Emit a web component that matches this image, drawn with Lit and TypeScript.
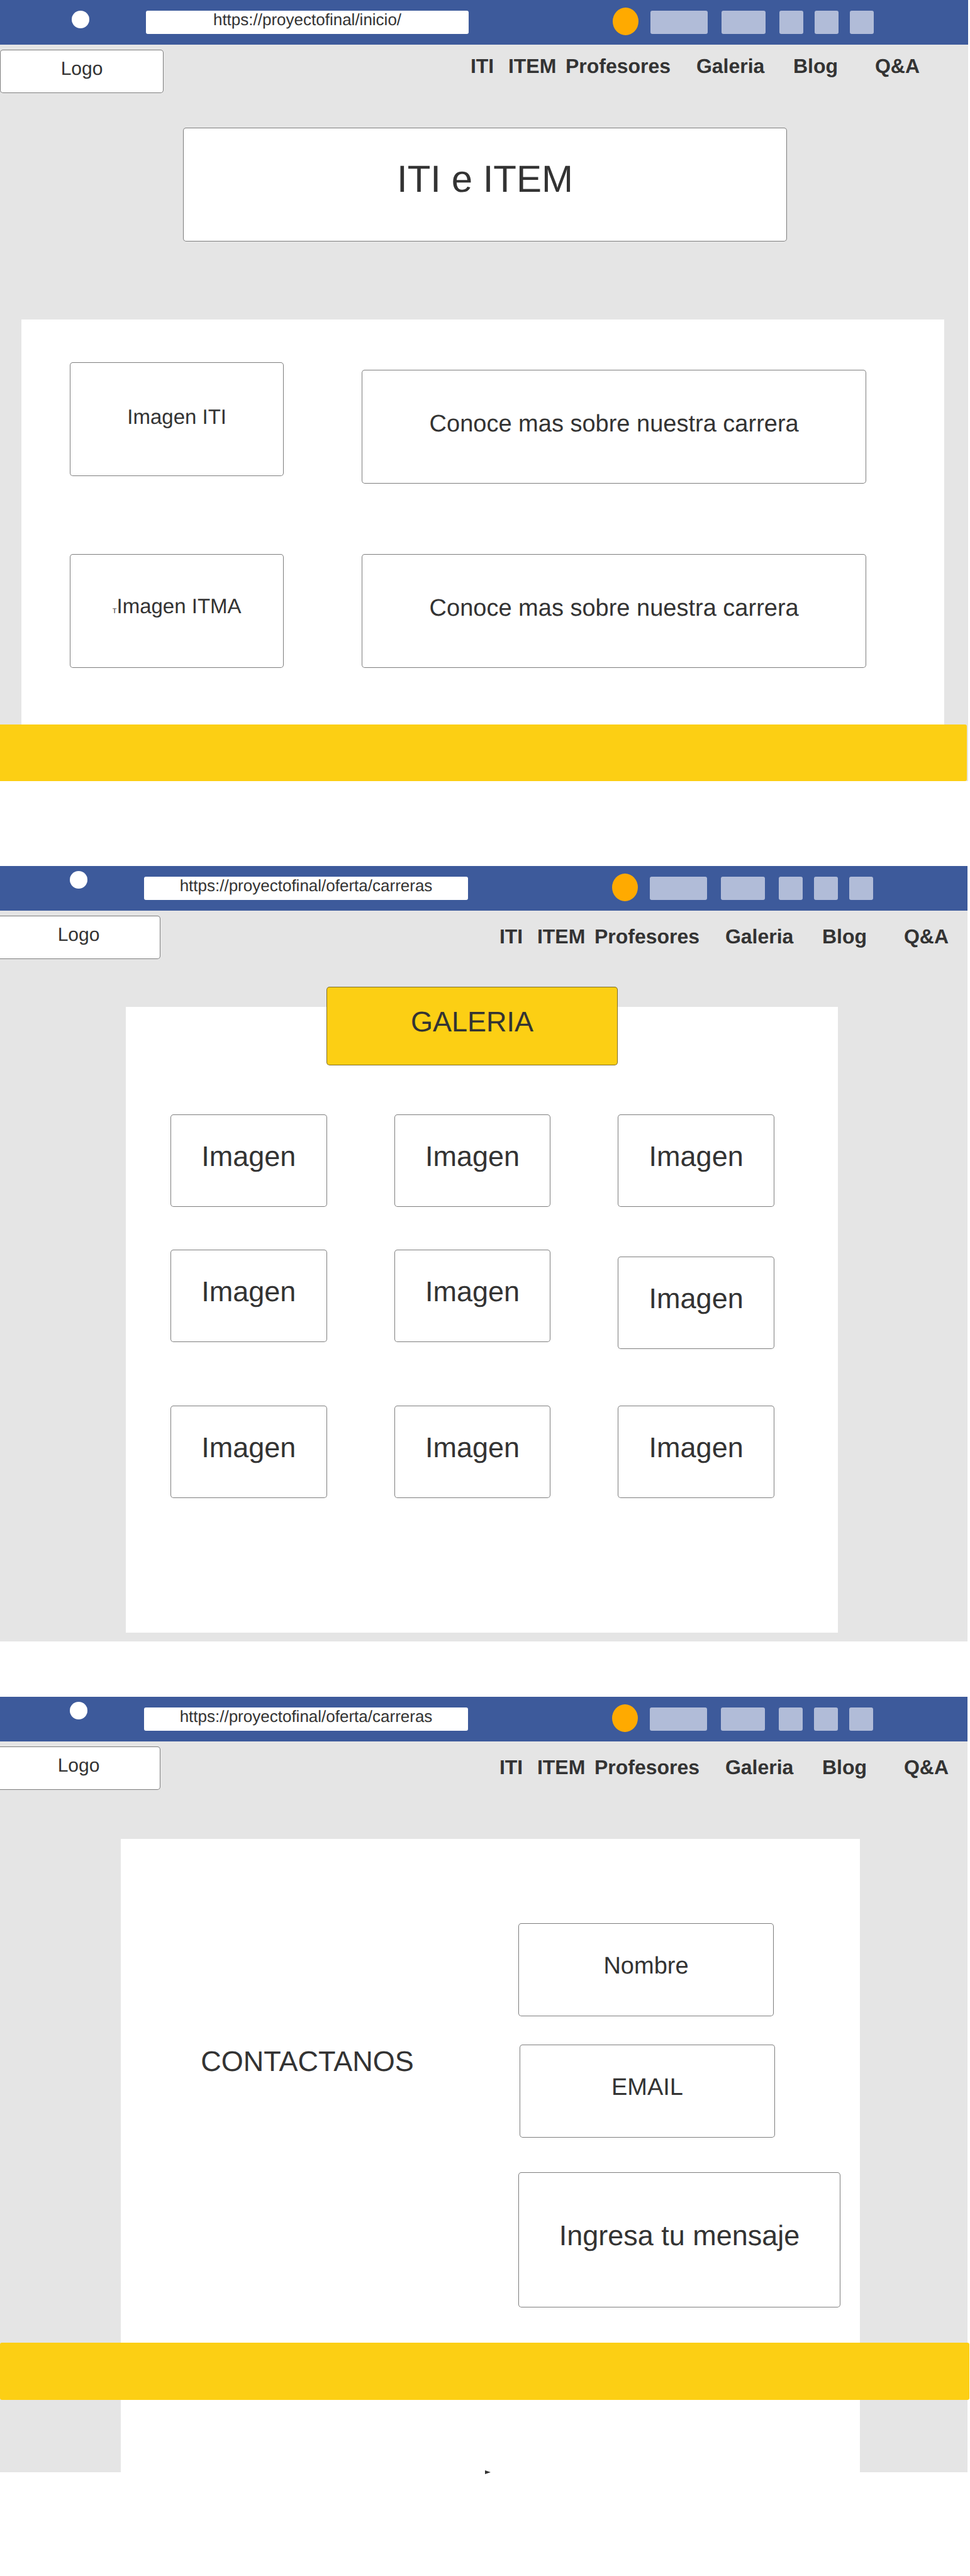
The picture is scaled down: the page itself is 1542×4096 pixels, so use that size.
import { LitElement, html, css } from "lit";
import { customElement, property } from "lit/decorators.js";
import { classMap } from "lit/directives/class-map.js";

const NAV_ITEMS = ["ITI", "ITEM", "Profesores", "Galeria", "Blog", "Q&A"];

@customElement("site-header")
class SiteHeader extends LitElement {
  static styles = css`
    :host {
      display: block;
    }
    .bar {
      box-sizing: border-box;
      height: 71px;
      padding: 8px 150px 0 111px;
      display: flex;
      align-items: flex-start;
      background: #3d5a9b;
    }
    .dot {
      flex: none;
      width: 28px;
      height: 28px;
      border-radius: 50%;
      background: #fff;
    }
    .url {
      box-sizing: border-box;
      flex: 1;
      min-width: 0;
      height: 37px;
      margin: 9px 229px 0 90px;
      padding: 0 0 8px;
      border: 0;
      border-radius: 3px;
      background: #fff;
      color: #333;
      font: 26px/29px "Liberation Sans", Arial, sans-serif;
      text-rendering: geometricPrecision;
      text-align: center;
    }
    .avatar {
      flex: none;
      width: 41px;
      height: 44px;
      margin: 4px 19px 0 0;
      border-radius: 50%;
      background: #fa0;
    }
    .chips {
      display: flex;
      gap: 18px;
      margin-top: 9px;
    }
    .chip {
      width: 38px;
      height: 37px;
      border-radius: 3px;
      background: #b1bcd8;
    }
    .wide {
      width: 91px;
      margin-right: 4px;
    }
    .medium {
      width: 70px;
      margin-right: 4px;
    }
    .row {
      display: flex;
      justify-content: space-between;
      align-items: flex-start;
      padding: 8px 30px 0 0;
    }
    .logo {
      box-sizing: border-box;
      width: 260px;
      height: 69px;
      margin-left: -5px;
      padding-bottom: 8px;
      display: flex;
      align-items: center;
      justify-content: center;
      border: 1px solid rgba(51, 51, 51, 0.64);
      border-radius: 5px;
      background: #fff;
      color: #333;
      font-size: 30px;
      line-height: 34px;
      text-decoration: none;
    }
    .nav {
      display: grid;
      grid-template-columns: 60px 91px 208px 154px 130px auto;
      margin-top: 15px;
    }
    .link {
      color: #333;
      font-size: 32px;
      line-height: 36px;
      font-weight: 700;
      text-decoration: none;
    }
    .home .bar {
      padding-left: 114px;
    }
    .home .dot {
      margin-top: 9px;
    }
    .home .row {
      padding-right: 77px;
    }
    .home .logo {
      margin-left: 0;
    }
    .home .nav {
      margin-top: 8px;
    }
  `;

  @property() url = "";
  @property({ type: Boolean }) home = false;

  render() {
    return html`
      <header class=${classMap({ header: true, home: this.home })}>
        <div class="bar">
          <span class="dot"></span>
          <input class="url" type="text" aria-label="URL" .value=${this.url} />
          <span class="avatar"></span>
          <div class="chips">
            <span class="chip wide"></span>
            <span class="chip medium"></span>
            <span class="chip"></span>
            <span class="chip"></span>
            <span class="chip"></span>
          </div>
        </div>
        <div class="row">
          <a class="logo" href="#">Logo</a>
          <nav class="nav">
            ${NAV_ITEMS.map((item) => html`<a class="link" href="#">${item}</a>`)}
          </nav>
        </div>
      </header>
    `;
  }
}

@customElement("app-root")
class AppRoot extends LitElement {
  static styles = css`
    :host {
      display: block;
      padding-bottom: 164px;
      background: #fff;
      color: #333;
      font-family: "Liberation Sans", Arial, sans-serif;
      text-rendering: geometricPrecision;
      overflow-x: clip;
    }
    .screen {
      margin-right: 4px;
      background: #e5e5e5;
    }
    .first {
      margin-right: 3px;
    }
    .second {
      margin-top: 135px;
      padding-bottom: 14px;
    }
    .third {
      margin-top: 88px;
    }
    .box {
      box-sizing: border-box;
      display: flex;
      align-items: center;
      justify-content: center;
      border: 1px solid rgba(51, 51, 51, 0.64);
      border-radius: 5px;
      background: #fff;
      color: #333;
      text-decoration: none;
    }
    .title {
      margin: 0;
      font-weight: 400;
      font-size: 45px;
      line-height: 52px;
    }
    .hero {
      height: 181px;
      margin: 55px 288px 0 291px;
      padding-bottom: 17px;
      font-size: 60px;
      line-height: 68px;
    }
    .panel {
      background: #fff;
    }
    .careers {
      display: grid;
      grid-template-columns: 340fr 801fr;
      gap: 112px 124px;
      margin: 124px 38px 0 34px;
      padding: 68px 124px 90px 77px;
    }
    .picture {
      height: 181px;
      padding-bottom: 8px;
      font-size: 33px;
      line-height: 38px;
    }
    .tiny {
      font-size: 11px;
    }
    .about {
      height: 181px;
      padding-bottom: 10px;
      font-size: 38px;
      line-height: 44px;
    }
    .lower {
      margin-top: 12px;
    }
    .band {
      height: 90px;
      border-radius: 3px;
      background: #fccf14;
    }
    .first .band {
      margin-right: 2px;
      border-radius: 0 3px 3px 0;
    }
    .third .band {
      height: 91px;
      margin-right: -3px;
    }
    .gallery {
      display: flex;
      flex-direction: column;
      margin: 76px 206px 0 200px;
      padding-bottom: 214px;
    }
    .badge {
      height: 125px;
      margin: -32px 350px 78px 319px;
      padding-bottom: 13px;
      background: #fccf14;
    }
    .shots {
      display: grid;
      grid-template-columns: repeat(3, 1fr);
      align-items: start;
      gap: 107px;
      padding: 0 101px 0 71px;
    }
    .middle {
      margin: 68px 0 90px;
    }
    .shot {
      height: 147px;
      padding-bottom: 13px;
      font-size: 45px;
      line-height: 52px;
    }
    .dropped {
      margin-top: 11px;
    }
    .contact {
      display: grid;
      grid-template-columns: 632fr 543fr;
      margin: 78px 171px 0 192px;
      padding: 134px 0 56px;
    }
    .heading {
      padding: 194px 39px 0 0;
      text-align: center;
    }
    .form {
      display: flex;
      flex-direction: column;
      align-items: flex-start;
    }
    .field {
      max-width: 100%;
      margin: 0;
      font-family: inherit;
      text-rendering: inherit;
      text-align: center;
      outline: none;
      resize: none;
    }
    .field::placeholder {
      color: #333;
      opacity: 1;
    }
    .line {
      width: 406px;
      height: 148px;
      padding: 0 0 11px;
      font-size: 38px;
      line-height: 44px;
    }
    .email {
      margin: 45px 0 55px 2px;
    }
    .message {
      display: block;
      width: 512px;
      height: 215px;
      padding: 74px 0 0;
      overflow: hidden;
      font-size: 45px;
      line-height: 52px;
    }
    .tail {
      position: relative;
      height: 115px;
      margin: 0 171px 0 192px;
    }
    .arrow {
      position: absolute;
      left: 579px;
      bottom: -3px;
      width: 9px;
      height: 6px;
    }
  `;

  private shots(extra: string, dropped = -1) {
    return html`
      <div class="shots ${extra}">
        ${[0, 1, 2].map(
          (i) => html`<div class="box shot ${i === dropped ? "dropped" : ""}">Imagen</div>`
        )}
      </div>
    `;
  }

  render() {
    return html`
      <section class="screen first">
        <site-header home url="https://proyectofinal/inicio/"></site-header>
        <h1 class="title box hero">ITI e ITEM</h1>
        <div class="panel careers">
          <div class="box picture">Imagen ITI</div>
          <a class="box about lower" href="#">Conoce mas sobre nuestra carrera</a>
          <div class="box picture"><span><span class="tiny">T</span>Imagen ITMA</span></div>
          <a class="box about" href="#">Conoce mas sobre nuestra carrera</a>
        </div>
        <div class="band"></div>
      </section>

      <section class="screen second">
        <site-header url="https://proyectofinal/oferta/carreras"></site-header>
        <div class="panel gallery">
          <h2 class="title box badge">GALERIA</h2>
          ${this.shots("")} ${this.shots("middle", 2)} ${this.shots("")}
        </div>
      </section>

      <section class="screen third">
        <site-header url="https://proyectofinal/oferta/carreras"></site-header>
        <div class="panel contact">
          <h2 class="title heading">CONTACTANOS</h2>
          <form class="form">
            <input class="box field line" type="text" aria-label="Nombre" placeholder="Nombre" />
            <input class="box field line email" type="email" aria-label="EMAIL" placeholder="EMAIL" />
            <textarea
              class="box field message"
              aria-label="Ingresa tu mensaje"
              placeholder="Ingresa tu mensaje"
            ></textarea>
          </form>
        </div>
        <div class="band"></div>
        <div class="panel tail">
          <svg class="arrow" viewBox="0 0 9 6" aria-hidden="true">
            <path d="M0 0L9 3L0 6Z" fill="#333" />
          </svg>
        </div>
      </section>
    `;
  }
}
